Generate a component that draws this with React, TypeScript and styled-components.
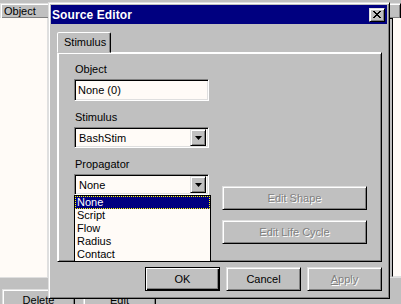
import styled, { createGlobalStyle, css } from "styled-components";

const GlobalStyle = createGlobalStyle`
  html, body {
    margin: 0;
    padding: 0;
    background: #c0c0c0;
  }
  body {
    font-family: "Liberation Sans", Arial, sans-serif;
    font-size: 11px;
    color: #000;
  }
`;

const raised = css`
  border: 1px solid;
  border-color: #dfdfdf #000 #000 #dfdfdf;
  box-shadow: inset 1px 1px #fff, inset -1px -1px #808080;
`;

const sunken = css`
  border: 1px solid;
  border-color: #808080 #fff #fff #808080;
  box-shadow: inset 1px 1px #000, inset -1px -1px #dfdfdf;
`;

const Screen = styled.div`
  position: relative;
  width: 401px;
  height: 304px;
  overflow: hidden;
  background: #c0c0c0;
`;

/* ---- the application behind the dialog ---- */

const Backdrop = styled.div`
  display: flex;
  flex-direction: column;
  height: 100%;
  padding-top: 3px;
  box-sizing: border-box;
`;

const HeaderRow = styled.div`
  display: flex;
  height: 15px;
`;

const HeaderCell = styled.div<{ $width?: number }>`
  ${raised};
  box-sizing: border-box;
  height: 16px;
  width: ${(p) => (p.$width ? `${p.$width}px` : "auto")};
  flex: ${(p) => (p.$width ? "none" : "1")};
  padding: 1px 3px;
  line-height: 13px;
`;

const BodyRow = styled.div`
  display: flex;
  justify-content: space-between;
  height: 266px;
  border-bottom: 1px solid #dfdfdf;
`;

const ListPane = styled.div`
  width: 47px;
  background: #fffbf7;
  border-right: 1px solid #dfdfdf;
`;

const SidePane = styled.div`
  width: 8px;
  height: 258px;
  background: #fffbf7;
  border-left: 1px solid #000;
  border-bottom: 1px solid #dfdfdf;
`;

const TabsRow = styled.div`
  display: flex;
  gap: 8px;
  padding: 11px 0 0 2px;
`;

const BottomTab = styled.div`
  ${raised};
  width: 73px;
  height: 22px;
  box-sizing: border-box;
  text-align: center;
  padding-top: 4px;
`;

/* ---- dialog window ---- */

const Dialog = styled.div`
  ${raised};
  position: absolute;
  left: 48px;
  top: 2px;
  width: 342px;
  height: 297px;
  box-sizing: border-box;
  padding: 2px;
  background: #c0c0c0;
  display: flex;
  flex-direction: column;
`;

const TitleBar = styled.div`
  display: flex;
  align-items: center;
  justify-content: space-between;
  height: 19px;
  padding: 0 2px 0 1px;
  background: #000080;
  color: #fff;
`;

const Title = styled.span`
  font-weight: bold;
  font-size: 12px;
  letter-spacing: 0.1px;
`;

const CloseButton = styled.div`
  ${raised};
  width: 16px;
  height: 14px;
  box-sizing: border-box;
  background: #c0c0c0;
  display: flex;
  align-items: center;
  justify-content: center;
`;

const DialogBody = styled.div`
  display: flex;
  flex-direction: column;
  padding: 8px 5px 0 6px;
`;

const TabStrip = styled.div`
  display: flex;
  height: 20px;
  position: relative;
  z-index: 1;
`;

const Tab = styled.div`
  width: 54px;
  height: 21px;
  box-sizing: border-box;
  border: 1px solid;
  border-color: #fff #000 transparent #fff;
  border-radius: 2px 2px 0 0;
  box-shadow: inset -1px 0 #808080;
  background: #c0c0c0;
  padding: 2px 0 0 6px;
  line-height: 14px;
`;

const TabPanel = styled.div`
  ${raised};
  border-color: #fff #000 #000 #fff;
  height: 210px;
  box-sizing: border-box;
  padding: 9px 0 0 16px;
  display: flex;
  gap: 11px;
`;

const FieldColumn = styled.div`
  display: flex;
  flex-direction: column;
  gap: 9px;
  width: 137px;
`;

const Field = styled.div`
  position: relative;
  display: flex;
  flex-direction: column;
  gap: 3px;
`;

const Label = styled.div`
  height: 14px;
  line-height: 14px;
  padding-left: 1px;
`;

const TextBox = styled.div`
  ${sunken};
  width: 135px;
  height: 22px;
  box-sizing: border-box;
  background: #fffbf7;
  padding: 3px 0 0 3px;
  line-height: 14px;
`;

const Combo = styled.div`
  ${sunken};
  width: 135px;
  height: 21px;
  box-sizing: border-box;
  background: #fffbf7;
  display: flex;
  align-items: center;
  justify-content: space-between;
  padding: 2px;
`;

const ComboText = styled.span`
  padding-left: 2px;
  line-height: 14px;
`;

const ComboArrow = styled.div`
  ${raised};
  width: 16px;
  height: 17px;
  box-sizing: border-box;
  background: #c0c0c0;
  display: flex;
  align-items: center;
  justify-content: center;
`;

const DropList = styled.div`
  position: absolute;
  left: 0;
  top: 100%;
  width: 137px;
  box-sizing: border-box;
  border: 1px solid #000;
  background: #fffbf7;
  z-index: 2;
`;

const DropItem = styled.div<{ $selected?: boolean }>`
  height: 13px;
  line-height: 13px;
  padding-left: 2px;
  box-sizing: border-box;
  ${(p) =>
    p.$selected &&
    css`
      background: #000080;
      color: #fff;
      outline: 1px dotted #ffff00;
      outline-offset: -1px;
    `}
`;

const ActionColumn = styled.div`
  display: flex;
  flex-direction: column;
  gap: 10px;
  padding-top: 124px;
`;

const PushButton = styled.div<{ $width: number; $default?: boolean; $disabled?: boolean }>`
  ${raised};
  width: ${(p) => p.$width}px;
  height: 24px;
  box-sizing: border-box;
  background: #c0c0c0;
  display: flex;
  align-items: center;
  justify-content: center;
  ${(p) =>
    p.$default &&
    css`
      border: 1px solid #000;
      box-shadow: inset 1px 1px #fff, inset -1px -1px #000, inset -2px -2px #808080;
    `}
  ${(p) =>
    p.$disabled &&
    css`
      color: #808080;
      text-shadow: 1px 1px 0 #fff;
    `}
`;

const ButtonRow = styled.div`
  display: flex;
  justify-content: flex-end;
  gap: 6px;
  padding: 5px 0 0 0;
`;

const Mnemonic = styled.span`
  text-decoration: underline;
`;

function ArrowDown() {
  return (
    <svg width="7" height="4" viewBox="0 0 7 4">
      <path d="M0 0h7L3.5 4z" fill="#000" />
    </svg>
  );
}

function CloseGlyph() {
  return (
    <svg width="8" height="7" viewBox="0 0 8 7" shapeRendering="crispEdges">
      <path
        d="M0 0h2v1h1v1h2v-1h1v-1h2v1h-1v1h-1v1h-1v1h1v1h1v1h1v1h-2v-1h-1v-1h-2v1h-1v1h-2v-1h1v-1h1v-1h1v-1h-1v-1h-1v-1h-1z"
        fill="#000"
      />
    </svg>
  );
}

const propagators = ["None", "Script", "Flow", "Radius", "Contact"];

export default function App() {
  return (
    <>
      <GlobalStyle />
      <Screen>
        <Backdrop>
          <HeaderRow>
            <HeaderCell $width={60}>Object</HeaderCell>
            <HeaderCell />
          </HeaderRow>
          <BodyRow>
            <ListPane />
            <SidePane />
          </BodyRow>
          <TabsRow>
            <BottomTab>Delete</BottomTab>
            <BottomTab>Edit</BottomTab>
          </TabsRow>
        </Backdrop>

        <Dialog>
          <TitleBar>
            <Title>Source Editor</Title>
            <CloseButton>
              <CloseGlyph />
            </CloseButton>
          </TitleBar>
          <DialogBody>
            <TabStrip>
              <Tab>Stimulus</Tab>
            </TabStrip>
            <TabPanel>
              <FieldColumn>
                <Field>
                  <Label>Object</Label>
                  <TextBox>None (0)</TextBox>
                </Field>
                <Field>
                  <Label>Stimulus</Label>
                  <Combo>
                    <ComboText>BashStim</ComboText>
                    <ComboArrow>
                      <ArrowDown />
                    </ComboArrow>
                  </Combo>
                </Field>
                <Field>
                  <Label>Propagator</Label>
                  <Combo>
                    <ComboText>None</ComboText>
                    <ComboArrow>
                      <ArrowDown />
                    </ComboArrow>
                  </Combo>
                  <DropList>
                    {propagators.map((p, i) => (
                      <DropItem key={p} $selected={i === 0}>
                        {p}
                      </DropItem>
                    ))}
                  </DropList>
                </Field>
              </FieldColumn>
              <ActionColumn>
                <PushButton $width={145} $disabled>
                  Edit Shape
                </PushButton>
                <PushButton $width={145} $disabled>
                  Edit Life Cycle
                </PushButton>
              </ActionColumn>
            </TabPanel>
            <ButtonRow>
              <PushButton $width={75} $default>
                OK
              </PushButton>
              <PushButton $width={75}>Cancel</PushButton>
              <PushButton $width={75} $disabled>
                <Mnemonic>A</Mnemonic>pply
              </PushButton>
            </ButtonRow>
          </DialogBody>
        </Dialog>
      </Screen>
    </>
  );
}
